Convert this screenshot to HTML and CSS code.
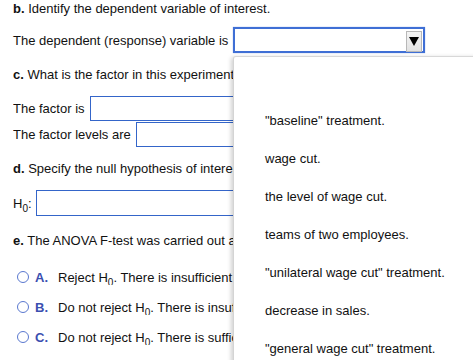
FILE: index.html
```html
<!DOCTYPE html>
<html>
<head>
<meta charset="utf-8">
<link rel="stylesheet" href="styles.css">
</head>
<body>
<div class="page">
  <div class="row q1"><span><b>b.</b> Identify the dependent variable of interest.</span></div>
  <div class="row sel-row"><span>The dependent (response) variable is</span>
    <div class="select"><span class="btn"><svg width="10" height="9" viewBox="0 0 10 9"><path d="M0 0H10L5 9Z" fill="#000"/></svg></span></div>
  </div>
  <div class="row clip q2"><span><b>c.</b> What is the factor in this experiment?</span></div>
  <div class="row clip in-row r-factor"><span>The factor is</span><div class="input w-factor"></div></div>
  <div class="row clip in-row r-levels"><span>The factor levels are</span><div class="input w-levels"></div></div>
  <div class="row clip q3"><span><b>d.</b> Specify the null hypothesis of interest.</span></div>
  <div class="row clip in-row r-h0"><span class="h0">H<sub>0</sub>:</span><div class="input w-h0"></div></div>
  <div class="row clip q4"><span><b>e.</b> The ANOVA F-test was carried out and the results are shown.</span></div>
  <div class="row clip opt o1"><span class="radio"></span><span class="letter">A.</span><span>Reject H<sub>0</sub>. There is insufficient evidence</span></div>
  <div class="row clip opt o2"><span class="radio"></span><span class="letter">B.</span><span>Do not reject H<sub>0</sub>. There is insufficient evidence</span></div>
  <div class="row clip opt o3"><span class="radio"></span><span class="letter">C.</span><span>Do not reject H<sub>0</sub>. There is sufficient evidence</span></div>

  <ul class="dropdown">
    <li></li>
    <li>"baseline" treatment.</li>
    <li>wage cut.</li>
    <li>the level of wage cut.</li>
    <li>teams of two employees.</li>
    <li>"unilateral wage cut" treatment.</li>
    <li>decrease in sales.</li>
    <li>"general wage cut" treatment.</li>
  </ul>
</div>
</body>
</html>
```
FILE: styles.css
```css
html, body {
  margin: 0;
  padding: 0;
  background: #fff;
}
body {
  font-family: "Liberation Sans", Arial, sans-serif;
  font-size: 13px;
  color: #111;
  overflow: hidden;
  width: 473px;
  height: 360px;
}
.page {
  position: relative;
  padding-left: 13px;
  height: 360px;
  overflow: hidden;
}
.row {
  display: flex;
  align-items: center;
  white-space: nowrap;
  height: 16px;
}
.clip {
  width: 220px;
  overflow: hidden;
}
.q1 { height: 16px; }
.sel-row { margin-top: 11px; height: 26px; }
.q2 { margin-top: 13px; }
.r-factor { margin-top: 14px; height: 25px; }
.r-levels { margin-top: 1px; height: 25px; }
.q3 { margin-top: 13px; }
.r-h0 { margin-top: 14px; height: 26px; }
.q4 { margin-top: 16px; }
.o1 { margin-top: 21px; }
.o2 { margin-top: 14px; }
.o3 { margin-top: 14px; }

sub {
  font-size: 10px;
  vertical-align: -4px;
  line-height: 0;
}
.select {
  margin-left: 5px;
  width: 187px;
  height: 22px;
  border: 2px solid #3f6fd5;
  box-shadow: 0 0 1px #8aa8e8;
  display: flex;
  justify-content: flex-end;
  align-items: center;
  padding-right: 1px;
  flex-shrink: 0;
}
.btn {
  width: 14px;
  height: 19px;
  border: 1px solid #b8b8b8;
  background: linear-gradient(#f4f4f4, #e2e2e2);
  display: flex;
  align-items: center;
  justify-content: center;
  margin-top: 3px;
}
.input {
  height: 23px;
  border: 1px solid #3465c9;
  margin-left: 5px;
  flex-shrink: 0;
  width: 300px;
}
.r-h0 .input { height: 24px; }
.h0 { padding-top: 1px; }
.w-h0 { margin-left: 4px; }
.radio {
  width: 10px;
  height: 10px;
  border: 1.5px solid #5a78cf;
  border-radius: 50%;
  margin-left: 4px;
  margin-right: 6px;
  flex-shrink: 0;
}
.letter {
  color: #3b4fb0;
  font-weight: bold;
  width: 23px;
  flex-shrink: 0;
}
.dropdown {
  position: absolute;
  left: 233px;
  top: 56px;
  width: 250px;
  height: 320px;
  margin: 0;
  padding: 7px 0 0 0;
  list-style: none;
  background: #fff;
  border-top: 1px solid #d8d8d8;
  border-left: 1px solid #d4d4d4;
  border-top-left-radius: 3px;
  box-shadow: -2px 1px 4px rgba(0,0,0,0.18);
  font-size: 13px;
}
.dropdown li {
  height: 38px;
  line-height: 38px;
  padding-left: 31px;
  color: #111;
}
```
